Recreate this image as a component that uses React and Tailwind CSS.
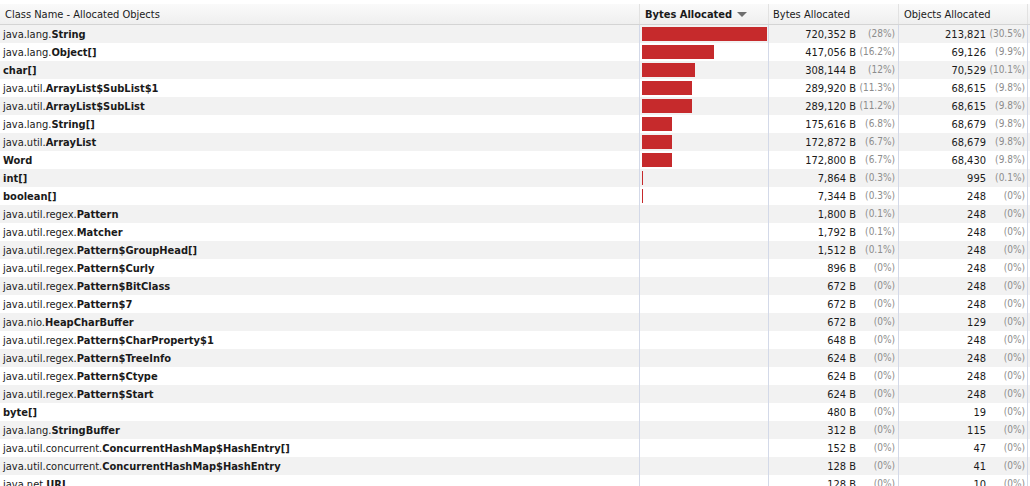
import React from "react";

const MAX_BYTES = 720352;
const BAR_MAX = 125;

const rows = [
  ["java.lang.", "String", 720352, "28%", "213,821", "30.5%"],
  ["java.lang.", "Object[]", 417056, "16.2%", "69,126", "9.9%"],
  ["", "char[]", 308144, "12%", "70,529", "10.1%"],
  ["java.util.", "ArrayList$SubList$1", 289920, "11.3%", "68,615", "9.8%"],
  ["java.util.", "ArrayList$SubList", 289120, "11.2%", "68,615", "9.8%"],
  ["java.lang.", "String[]", 175616, "6.8%", "68,679", "9.8%"],
  ["java.util.", "ArrayList", 172872, "6.7%", "68,679", "9.8%"],
  ["", "Word", 172800, "6.7%", "68,430", "9.8%"],
  ["", "int[]", 7864, "0.3%", "995", "0.1%"],
  ["", "boolean[]", 7344, "0.3%", "248", "0%"],
  ["java.util.regex.", "Pattern", 1800, "0.1%", "248", "0%"],
  ["java.util.regex.", "Matcher", 1792, "0.1%", "248", "0%"],
  ["java.util.regex.", "Pattern$GroupHead[]", 1512, "0.1%", "248", "0%"],
  ["java.util.regex.", "Pattern$Curly", 896, "0%", "248", "0%"],
  ["java.util.regex.", "Pattern$BitClass", 672, "0%", "248", "0%"],
  ["java.util.regex.", "Pattern$7", 672, "0%", "248", "0%"],
  ["java.nio.", "HeapCharBuffer", 672, "0%", "129", "0%"],
  ["java.util.regex.", "Pattern$CharProperty$1", 648, "0%", "248", "0%"],
  ["java.util.regex.", "Pattern$TreeInfo", 624, "0%", "248", "0%"],
  ["java.util.regex.", "Pattern$Ctype", 624, "0%", "248", "0%"],
  ["java.util.regex.", "Pattern$Start", 624, "0%", "248", "0%"],
  ["", "byte[]", 480, "0%", "19", "0%"],
  ["java.lang.", "StringBuffer", 312, "0%", "115", "0%"],
  ["java.util.concurrent.", "ConcurrentHashMap$HashEntry[]", 152, "0%", "47", "0%"],
  ["java.util.concurrent.", "ConcurrentHashMap$HashEntry", 128, "0%", "41", "0%"],
  ["java.net.", "URL", 128, "0%", "10", "0%"],
];

const fmtBytes = (n) => n.toLocaleString("en-US") + " B";

const App = () => {
  return (
    <div className="w-[1030px] h-[486px] overflow-hidden bg-white pt-[4px] font-['DejaVu_Sans_Condensed','DejaVu_Sans',sans-serif] text-[11px] text-[#1a1a1a] leading-none">
      {/* header */}
      <div className="flex h-[21px] border-b border-[#d4d4d4] bg-gradient-to-b from-[#fafafa] to-[#efefef]">
        <div className="w-[640px] flex items-center pl-[5px] border-r border-[#e2e2e2]">
          Class Name - Allocated Objects
        </div>
        <div className="w-[129px] flex items-center pl-[5px] border-r border-[#e2e2e2] font-bold">
          Bytes Allocated
          <svg width="10" height="6" viewBox="0 0 10 6" className="ml-[5px] mt-[1px]">
            <polygon points="0,0 10,0 5,5" fill="#6e6e6e" />
          </svg>
        </div>
        <div className="w-[130px] flex items-center pl-[4px] border-r border-[#e2e2e2]">
          Bytes Allocated
        </div>
        <div className="w-[129px] flex items-center pl-[5px] border-r border-[#e2e2e2]">
          Objects Allocated
        </div>
      </div>

      {/* rows */}
      {rows.map((r, i) => {
        const barW = Math.round((r[2] / MAX_BYTES) * BAR_MAX);
        return (
          <div
            key={i}
            className={`flex h-[18px] ${i % 2 === 0 ? "bg-[#f2f2f2]" : "bg-white"}`}
          >
            <div className="w-[640px] flex items-center pl-[3px] border-r border-[#d3d9e8] whitespace-nowrap">
              <span>{r[0]}</span>
              <span className="font-bold">{r[1]}</span>
            </div>
            <div className="w-[129px] flex items-center pl-[2px] border-r border-[#d3d9e8]">
              {barW > 0 && (
                <div className="h-[14px] bg-[#c62a2c]" style={{ width: barW }} />
              )}
            </div>
            <div className="w-[130px] flex items-center border-r border-[#d3d9e8]">
              <span className="flex-1 text-right">{fmtBytes(r[2])}</span>
              <span className="w-[42px] pr-[3px] text-right text-[10px] text-[#8c8c8c]">({r[3]})</span>
            </div>
            <div className="w-[129px] flex items-center border-r border-[#d3d9e8]">
              <span className="flex-1 text-right">{r[4]}</span>
              <span className="w-[41px] pr-[2px] text-right text-[10px] text-[#8c8c8c]">({r[5]})</span>
            </div>
          </div>
        );
      })}
    </div>
  );
};

export default App;
